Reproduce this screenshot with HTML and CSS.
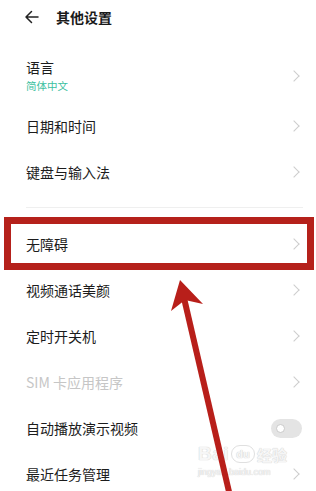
FILE: index.html
```html
<!DOCTYPE html>
<html lang="zh">
<head>
<meta charset="utf-8">
<link rel="stylesheet" href="styles.css">
</head>
<body>
<div class="page">
  <header class="header">
    <svg class="back" width="16" height="16" viewBox="0 0 16 16"><path d="M14 8H2.5M7.5 2.5L2 8l5.5 5.5" fill="none" stroke="#222" stroke-width="1.5" stroke-linecap="round" stroke-linejoin="round"/></svg>
    <span class="title">其他设置</span>
  </header>

  <div class="row row-lang">
    <div class="texts">
      <span class="label">语言</span>
      <span class="sub">简体中文</span>
    </div>
    <span class="chev"></span>
  </div>
  <div class="row"><span class="label">日期和时间</span><span class="chev"></span></div>
  <div class="row"><span class="label">键盘与输入法</span><span class="chev"></span></div>
  <div class="divider"><div class="line"></div></div>
  <div class="row highlight"><span class="label">无障碍</span><span class="chev"></span><div class="redbox"></div></div>
  <div class="row"><span class="label">视频通话美颜</span><span class="chev"></span></div>
  <div class="row"><span class="label">定时开关机</span><span class="chev"></span></div>
  <div class="row"><span class="label disabled">SIM 卡应用程序</span><span class="chev"></span></div>
  <div class="row"><span class="label">自动播放演示视频</span><span class="toggle"><span class="knob"></span></span></div>
  <div class="row"><span class="label">最近任务管理</span><span class="chev"></span></div>

  <div class="watermark">
    <div class="wm-top"><span class="wm-bai">Bai</span><span class="wm-du">du</span><span class="wm-jy">经验</span></div>
    <div class="wm-url">jingyan.baidu.com</div>
  </div>

  <svg class="arrow" width="316" height="491" viewBox="0 0 316 491">
    <line x1="184" y1="298" x2="230" y2="496" stroke="#b81f1a" stroke-width="6"/>
    <polygon points="180,280 171,311 185,300 203,304" fill="#b81f1a"/>
  </svg>
</div>
</body>
</html>
```
FILE: styles.css
```css
* { box-sizing: border-box; }
html, body { margin: 0; padding: 0; background: #fff; }
body {
  font-family: "Noto Sans CJK SC", "Noto Sans", sans-serif;
  color: #1c1c1c;
  width: 316px;
  height: 491px;
  overflow: hidden;
}
.page { position: relative; width: 316px; height: 491px; overflow: hidden; }

.header {
  height: 50px;
  display: flex;
  align-items: flex-start;
  padding: 8px 0 0 24px;
  gap: 16px;
}
.back { flex: none; margin-top: 1px; }
.title { font-size: 14px; line-height: 18px; font-weight: 700; color: #1a1a1a; }

.row {
  position: relative;
  height: 46px;
  display: flex;
  align-items: center;
  justify-content: space-between;
  padding: 0 14px 0 26px;
}
.row-lang { height: 53px; padding-bottom: 2px; }
.texts { display: flex; flex-direction: column; gap: 3px; }
.label { font-size: 14px; line-height: 18px; }
.sub { font-size: 10.5px; line-height: 14px; color: #3dbf9f; }
.disabled { color: #c6c6c6; }

.chev {
  width: 8px; height: 8px;
  border-top: 1.3px solid #cdcdcd;
  border-right: 1.3px solid #cdcdcd;
  transform: rotate(45deg);
  margin-right: 4px;
}

.divider { height: 26px; padding: 12px 13px 0 26px; }
.line { height: 1px; background: #efefef; }

.redbox {
  position: absolute;
  left: 4px; right: 2px; top: -4px; bottom: -3px;
  border: 7px solid #b5211b;
}

.toggle {
  width: 31px; height: 19px;
  border-radius: 10px;
  background: #e4e4e4;
  display: flex;
  align-items: center;
  padding-left: 5px;
}
.knob {
  width: 9px; height: 9px;
  border-radius: 50%;
  background: #fff;
  border: 1.5px solid #c9c9c9;
}

.watermark {
  position: absolute;
  left: 198px; top: 444px;
  color: #f6f6f6;
  text-shadow: 0 0 1px #d2d2d2, 0 0 1px #d2d2d2;
  font-family: "Liberation Sans", "Noto Sans CJK SC", sans-serif;
}
.wm-top { display: flex; align-items: center; height: 20px; }
.wm-bai { font-size: 19px; font-weight: 700; line-height: 20px; letter-spacing: 0.5px; }
.wm-du { font-size: 11px; font-weight: 700; width: 24px; height: 18px; border-radius: 9px; border: 1px solid #e0e0e0; display: flex; align-items: center; justify-content: center; margin: 0 2px; }
.wm-jy { font-size: 15px; font-weight: 700; }
.wm-url { font-size: 9px; line-height: 12px; margin-top: 2px; }

.arrow { position: absolute; left: 0; top: 0; pointer-events: none; }
```
